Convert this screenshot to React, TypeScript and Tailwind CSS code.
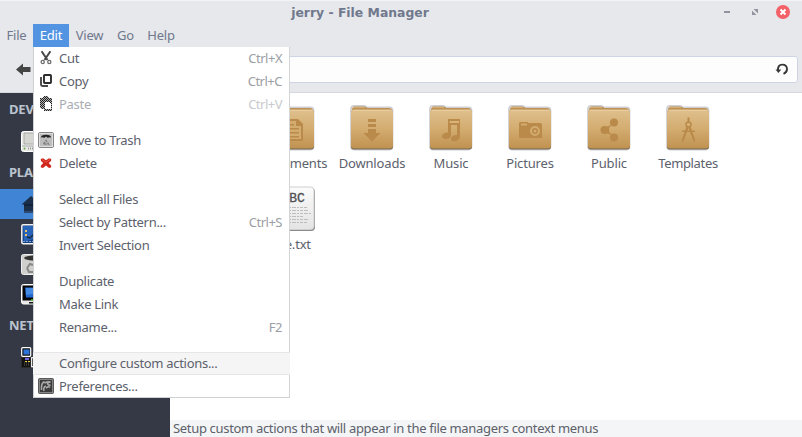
import type { ReactNode } from "react";

const menus = [
  { name: "File", width: "w-[33px]" },
  { name: "Edit", width: "w-[36px]" },
  { name: "View", width: "w-[41px]" },
  { name: "Go", width: "w-[31px]" },
  { name: "Help", width: "w-[40px]" },
];

function CutIcon() {
  return (
    <svg width="16" height="16" viewBox="0 0 16 16" fill="none">
      <path d="M3.600 1.200 9.500 10M12.400 1.200 6.500 10" stroke="#484848" strokeWidth="2" />
      <circle cx="4.700" cy="12" r="1.600" stroke="#6c6c6c" strokeWidth="1.300" />
      <circle cx="11.300" cy="12" r="1.600" stroke="#6c6c6c" strokeWidth="1.300" />
    </svg>
  );
}

function CopyIcon() {
  return (
    <svg width="16" height="16" viewBox="0 0 16 16" fill="none">
      <rect x="6" y="2" width="7" height="8" rx="0.800" stroke="#2c2c2c" strokeWidth="1.900" />
      <path d="M3 4v7.500Q3 13 4.500 13H10" stroke="#484848" strokeWidth="1.900" />
    </svg>
  );
}

function PasteIcon() {
  return (
    <svg width="16" height="16" viewBox="0 0 16 16" shapeRendering="crispEdges">
      <defs>
        <pattern id="dither" width="2" height="2" patternUnits="userSpaceOnUse">
          <rect width="2" height="2" fill="#b0b0b0" />
          <rect width="1" height="1" fill="#222" />
          <rect x="1" y="1" width="1" height="1" fill="#222" />
        </pattern>
      </defs>
      <path d="M2 3q0-1 1-1h2q0-2 3-2t3 2h1q2 0 2 2v11H6v-2H3l-1-2Z" fill="url(#dither)" />
      <path d="M7 6h4l2 2v5H7Z" fill="#fff" />
    </svg>
  );
}

function TrashIcon() {
  return (
    <svg width="16" height="16" viewBox="0 0 16 16" fill="none">
      <rect x="0.5" y="0.5" width="15" height="15" rx="1.500" fill="#c6c6c6" stroke="#858585" />
      <rect x="1.500" y="1.500" width="13" height="13" fill="#bdbdbd" stroke="#dedede" />
      <path d="M3 5.500Q3 2.800 8 2.800t5 2.700l-2-.3-1 .8-2-1.500L6 6l-1-.8Z" fill="#222" />
      <path d="M5.500 12 8 8.500l2.500 3.500Z" stroke="#808080" strokeWidth="1.400" strokeDasharray="2.500 1" />
    </svg>
  );
}

function DeleteIcon() {
  return (
    <svg width="16" height="16" viewBox="0 0 16 16">
      <path d="M2.700 4 5 3.300l3 2 3-2 2.300.7-.3 2-2.300 2 2.300 2.500.3 1.700-2.300.9-3-2.500-3 2.500-2.300-.9.300-1.700L5.300 8 3 6Z" fill="#d0281c" />
      <path d="m4 4.500 4 2.700 4-2.700" stroke="#ea5346" strokeWidth="1" fill="none" />
    </svg>
  );
}

function PreferencesIcon() {
  return (
    <svg width="16" height="16" viewBox="0 0 16 16" fill="none">
      <rect x="0.5" y="0.5" width="15" height="15" rx="1" fill="#3c3c3c" stroke="#5a5a5a" />
      <rect x="1.500" y="1.500" width="13" height="13" stroke="#858585" />
      <path d="M3.500 12V9q0-4 3-5.500M6 13q-1-4 2-5M6.500 5q3-1.500 6-1-3 .5-3 2 1.500 1.500 3 1M8 10l2.500-1.500 1.500 1" stroke="#aaa" strokeWidth="1.500" />
    </svg>
  );
}

type Entry = { label: string; keys?: string; icon?: ReactNode; off?: boolean; hot?: boolean };

const groups: Entry[][] = [
  [
    { label: "Cut", keys: "Ctrl+X", icon: <CutIcon /> },
    { label: "Copy", keys: "Ctrl+C", icon: <CopyIcon /> },
    { label: "Paste", keys: "Ctrl+V", icon: <PasteIcon />, off: true },
  ],
  [
    { label: "Move to Trash", icon: <TrashIcon /> },
    { label: "Delete", icon: <DeleteIcon /> },
  ],
  [
    { label: "Select all Files" },
    { label: "Select by Pattern...", keys: "Ctrl+S" },
    { label: "Invert Selection" },
  ],
  [{ label: "Duplicate" }, { label: "Make Link" }, { label: "Rename...", keys: "F2" }],
  [
    { label: "Configure custom actions...", hot: true },
    { label: "Preferences...", icon: <PreferencesIcon /> },
  ],
];

function EditMenu() {
  return (
    <div className="absolute left-[33px] top-[47px] flex h-[351px] w-[257px] flex-col gap-[13px] bg-white shadow-[inset_1px_-1px_0_#cfd0d2,inset_-1px_0_0_#d4d5d7]">
      {groups.map((group, i) => (
        <div key={i}>
          {group.map((entry) => (
            <div
              key={entry.label}
              className={`flex h-[23px] items-center pb-px pl-[5px] pr-2 ${entry.hot ? "border-y border-[#e6e6e6] bg-[#f5f5f5]" : ""} ${entry.off ? "text-[#a9acb2]" : "text-[#5c616c]"}`}
            >
              <span className="h-4 w-[21px]">{entry.icon}</span>
              <span className="flex-1 whitespace-nowrap tracking-[-0.3px]">{entry.label}</span>
              <span className={`tracking-[-0.5px] ${entry.off ? "text-[#c8cacd]" : "text-[#9b9ea5]"}`}>{entry.keys}</span>
            </div>
          ))}
        </div>
      ))}
    </div>
  );
}

function Folder({ children }: { children: ReactNode }) {
  return (
    <svg width="48" height="48" viewBox="0 0 48 48" className="block">
      <defs>
        <linearGradient id="folder" x2="0" y2="1">
          <stop stopColor="#dfc08d" />
          <stop offset="0.5" stopColor="#d3ac70" />
          <stop offset="1" stopColor="#c09250" />
        </linearGradient>
      </defs>
      <path d="M3 5q0-3 3-3h10q2 0 2.500 1.500h23q3 0 3 3V42q0 3.500-3 3.500h-35.500q-3 0-3-3Z" fill="none" stroke="#445" strokeOpacity="0.250" strokeWidth="1.800" />
      <path d="M4 6q0-3.500 3-3.500h9q3 0 3 1.500h22q3 0 3 3v6H4Z" fill="#bd9254" />
      <path d="M5 3.500h12" stroke="#d2ad75" />
      <rect x="3" y="6" width="42" height="39.500" rx="3" fill="#6e6453" />
      <rect x="3" y="5.500" width="42" height="39" rx="3" fill="url(#folder)" />
      <path d="M5 6.500h38" stroke="#e8cc9e" />
      <g fill="#b98a49" stroke="none">{children}</g>
    </svg>
  );
}

const documents = (
  <>
    <path d="M14 15h15l5 5v17H14Z" />
    <path d="M16 17h11v5h5v13H16Z" fill="#d3ab6e" />
    <path d="M18 20h7v1.500h-7ZM18 24h12v1.500H18ZM18 28h12v1.500H18ZM18 32h12v1.500H18Z" />
  </>
);
const downloads = <path d="M20 15h8v3h-8ZM20 20h8v3h-8ZM20 25h8v4h4.500L24 37.500 15.500 29H20Z" />;
const music = (
  <path d="M21 15h12v17q0 4-4 5-5 1-5-2.500 1-3.500 6-3.500V21h-6v10q0 4-5 4-4 0-4-3 1-3.500 6-3.500ZM22.500 17v2H32v-2Z" />
);
const pictures = (
  <>
    <path d="M14 18h8v1h12q2 0 2 2v13H13V19Z" />
    <path d="M15 19.500h6v2h-6Z" fill="#d3ab6e" />
    <circle cx="29" cy="27" r="4" fill="none" stroke="#d3ab6e" strokeWidth="2" />
    <circle cx="29" cy="27" r="1.500" fill="#d3ab6e" />
  </>
);
const shared = (
  <>
    <path d="M20 23q8-1 7-6l3 3q-7 2-6 6 0 4 6 6l-3 3q1-5-7-6Z" />
    <circle cx="19.500" cy="26" r="4" />
    <circle cx="29" cy="18.500" r="4" />
    <circle cx="29" cy="33.500" r="4" />
  </>
);
const templates = (
  <>
    <path d="M23.500 13.500h2V18h-2ZM18 26.500h13V28H18Z" />
    <circle cx="24.500" cy="20.500" r="2.500" fill="none" stroke="#b98a49" strokeWidth="1.500" />
    <path d="m22.500 22.500-4.500 13v3l2-2.500 4.500-12ZM26.500 22.500l4.500 13v3l-2-2.500-4.500-12Z" />
  </>
);

const folders: [string, ReactNode][] = [
  ["Documents", documents],
  ["Downloads", downloads],
  ["Music", music],
  ["Pictures", pictures],
  ["Public", shared],
  ["Templates", templates],
];

function TextFile() {
  return (
    <svg width="48" height="48" viewBox="0 0 48 48" className="block">
      <defs>
        <linearGradient id="sheet" x2="0" y2="1">
          <stop stopColor="#fbfbfb" />
          <stop offset="1" stopColor="#e4e4e4" />
        </linearGradient>
      </defs>
      <rect x="3" y="3" width="43" height="43" rx="4" fill="#777" opacity="0.85" />
      <rect x="2.500" y="2" width="42.500" height="42.500" rx="3.500" fill="url(#sheet)" stroke="#cfcfcf" />
      <text x="12.500" y="17" fontSize="13" letterSpacing="0" fill="#505050" stroke="#505050" strokeWidth="0.300" fontFamily="Liberation Mono">ABC</text>
      <g stroke="#bdbdbd" strokeWidth="1" strokeDasharray="3 1 4 1 2 1">
        <path d="M7 22.500h31M7 25.500h32M7 28.500h35M7 31.500h28M7 34.500h33M7 37.500h31" />
      </g>
    </svg>
  );
}

function DriveIcon() {
  return (
    <svg width="22" height="22" viewBox="0 0 22 22">
      <rect x="0.500" y="0.500" width="22" height="20" rx="2" fill="#e9e9e5" stroke="#fff" />
      <path d="M3 2h19v11H3Z" fill="#d5d5d2" stroke="#999" strokeWidth="0.700" />
      <path d="M1 15h21" stroke="#aaa" />
      <circle cx="3.500" cy="17.500" r="1" fill="#62a83c" />
      <path d="M7 17.500h15" stroke="#999" strokeDasharray="1 1" strokeWidth="2" />
    </svg>
  );
}

function HomeIcon() {
  return (
    <svg width="22" height="22" viewBox="0 0 22 22">
      <path d="m0.500 10.500 9.500-8.500 10 8.500H18V19H3v-8.500Z" fill="#1b2f4b" />
      <path d="M3 10h15v2H3Z" fill="#10223a" />
      <path d="M3 18h16" stroke="#315480" strokeWidth="1.500" />
    </svg>
  );
}

function DesktopIcon() {
  return (
    <svg width="22" height="22" viewBox="0 0 22 22">
      <rect x="0.800" y="0.800" width="21" height="19" rx="1.500" fill="#173e7f" stroke="#f2f2ef" strokeWidth="1.500" />
      <path d="M2 2h20v10L3 18Z" fill="#2864b8" />
      <path d="M4 6h2v2H4ZM4 10h2v2H4Z" fill="#e4c06c" />
      <path d="m6 13 3 1 4-4" stroke="#152943" strokeWidth="1.500" fill="none" />
      <path d="M2 17.500h20" stroke="#7da5d8" strokeDasharray="2 1" />
    </svg>
  );
}

function BinIcon() {
  return (
    <svg width="22" height="22" viewBox="0 0 22 22">
      <rect x="0.500" y="0.500" width="21" height="20" rx="2" fill="#cfcfcd" stroke="#eee" />
      <path d="M3.500 3q8-3 16 0v3q-8 2-16-1Z" fill="#323232" />
      <path d="m6 14 3-4 3 1M6 14l2 4h4" fill="none" stroke="#888" strokeWidth="2" />
    </svg>
  );
}

function ComputerIcon() {
  return (
    <svg width="22" height="22" viewBox="0 0 22 22">
      <rect x="0.500" y="0.500" width="21" height="19.500" rx="2" fill="#e8e8e8" stroke="#fff" />
      <rect x="1.500" y="1.500" width="21" height="15" fill="#050505" />
      <path d="M4 3.500h18v10H5Z" fill="#2469cf" />
      <path d="M5 4h17v4L5 11Z" fill="#438be3" />
      <path d="M8 18h14v1.500H8Z" fill="#111" />
      <circle cx="11" cy="16" r="0.900" fill="#52dc2e" />
    </svg>
  );
}

function NetworkIcon() {
  return (
    <svg width="22" height="22" viewBox="0 0 22 22">
      <rect x="0.700" y="0.700" width="9" height="8.600" rx="1" fill="#111" stroke="#fff" strokeWidth="1.200" />
      <path d="M2.500 2.500h6v5h-6Z" fill="#2d74d9" />
      <rect x="0.500" y="10.500" width="9" height="10" fill="#111" stroke="#2b2b2b" />
      <path d="M4 11h4v2H4Z" fill="#7167dd" />
      <path d="M3 16h6M3 18h6" stroke="#665f55" strokeDasharray="1 1" />
      <path d="M4 14.500h5" stroke="#f1d148" strokeDasharray="2 1" />
      <rect x="10.700" y="10.700" width="10" height="9" fill="#111" stroke="#fff" strokeWidth="1.200" />
    </svg>
  );
}

function Section({ title }: { title: string }) {
  return (
    <div className="flex h-[33px] w-[33px] items-center overflow-hidden pb-0.5 pl-[9px] text-[13px] font-bold tracking-[-0.2px] text-[#bac3cf]">
      {title}
    </div>
  );
}

function Place({ icon, active }: { icon: ReactNode; active?: boolean }) {
  return <div className={`flex h-[30px] items-center pl-[21px] pt-0.5 ${active ? "bg-[#4084d6]" : ""}`}>{icon}</div>;
}

export default function App() {
  return (
    <div className="relative flex h-[437px] w-[802px] flex-col overflow-hidden bg-white font-['Noto_Sans',sans-serif] text-[13px] leading-[18px] text-[#5c616c]">
      <header className="h-[93px] border-b border-t border-b-[#d5d8de] border-t-[#f3f4f5] bg-[#e7e8eb] text-[#70788d]">
        <div className="flex h-[23px] items-center">
          <div className="w-[720px] text-center font-['DejaVu_Sans',sans-serif] text-[12.4px] font-bold">
            <span>jerry - File Manager</span>
          </div>
          <svg width="82" height="23" viewBox="0 0 82 23">
            <path d="M4 11h6" stroke="#90949e" strokeWidth="2" />
            <path d="M33.500 8H38v4.500ZM32 9.500V14h4.500Z" fill="#90949e" />
            <circle cx="63" cy="11" r="7" fill="#f46067" />
            <path d="m60.500 8.500 5 5m0-5-5 5" stroke="#fff" strokeWidth="2" />
          </svg>
        </div>
        <nav className="flex h-[23px]">
          {menus.map((menu) => (
            <div
              key={menu.name}
              className={`flex items-center justify-center pb-px tracking-[-0.2px] ${menu.width} ${menu.name === "Edit" ? "bg-[#5294e2] text-white" : ""}`}
            >
              {menu.name}
            </div>
          ))}
        </nav>
        <div className="flex h-[45px] items-center pl-4 pr-1">
          <svg width="16" height="16" viewBox="0 0 16 16">
            <path d="M0 7.500 7 1.500V5h7.500v5H7v3.500Z" fill="#454545" />
          </svg>
          <div className="ml-2 flex h-[27px] flex-1 items-center justify-end rounded-[3px] border border-[#cdd5e5] bg-[#fdfdfd] pr-2">
            <svg width="16" height="16" viewBox="0 0 16 16" fill="none">
              <path d="M5 8.500Q4.600 2.600 9.300 2.600q4.700 0 4.700 4.700 0 3-3.500 4.500" stroke="#383838" strokeWidth="1.900" />
              <path d="M2.500 7.500h5.800L5.400 11Z" fill="#383838" />
            </svg>
          </div>
        </div>
      </header>
      <div className="flex flex-1">
        <aside className="w-[170px] bg-[#353945]">
          <Section title="DEVICES" />
          <Place icon={<DriveIcon />} />
          <Section title="PLACES" />
          <Place icon={<HomeIcon />} active />
          <Place icon={<DesktopIcon />} />
          <Place icon={<BinIcon />} />
          <Place icon={<ComputerIcon />} />
          <Section title="NETWORK" />
          <Place icon={<NetworkIcon />} />
        </aside>
        <main className="flex flex-1 flex-col">
          <div className="grid flex-1 auto-rows-[81px] grid-cols-[repeat(6,79px)] pl-[83px] pt-[11px]">
            {folders.map(([name, mark]) => (
              <div key={name} className="flex flex-col items-center">
                <Folder>{mark}</Folder>
                <span className={`mt-0.5 pl-px ${name === "Templates" ? "tracking-[-0.35px]" : "tracking-[-0.15px]"}`}>{name}</span>
              </div>
            ))}
            <div className="flex flex-col items-center">
              <TextFile />
              <span className="mt-0.5 tracking-[-0.2px]">file.txt</span>
            </div>
          </div>
          <footer className="flex h-[17px] items-center bg-[#f4f5f6] pb-0.5 pl-[3px] tracking-[-0.325px]">
            <span>Setup custom actions that will appear in the file managers context menus</span>
          </footer>
        </main>
      </div>
      <EditMenu />
    </div>
  );
}
